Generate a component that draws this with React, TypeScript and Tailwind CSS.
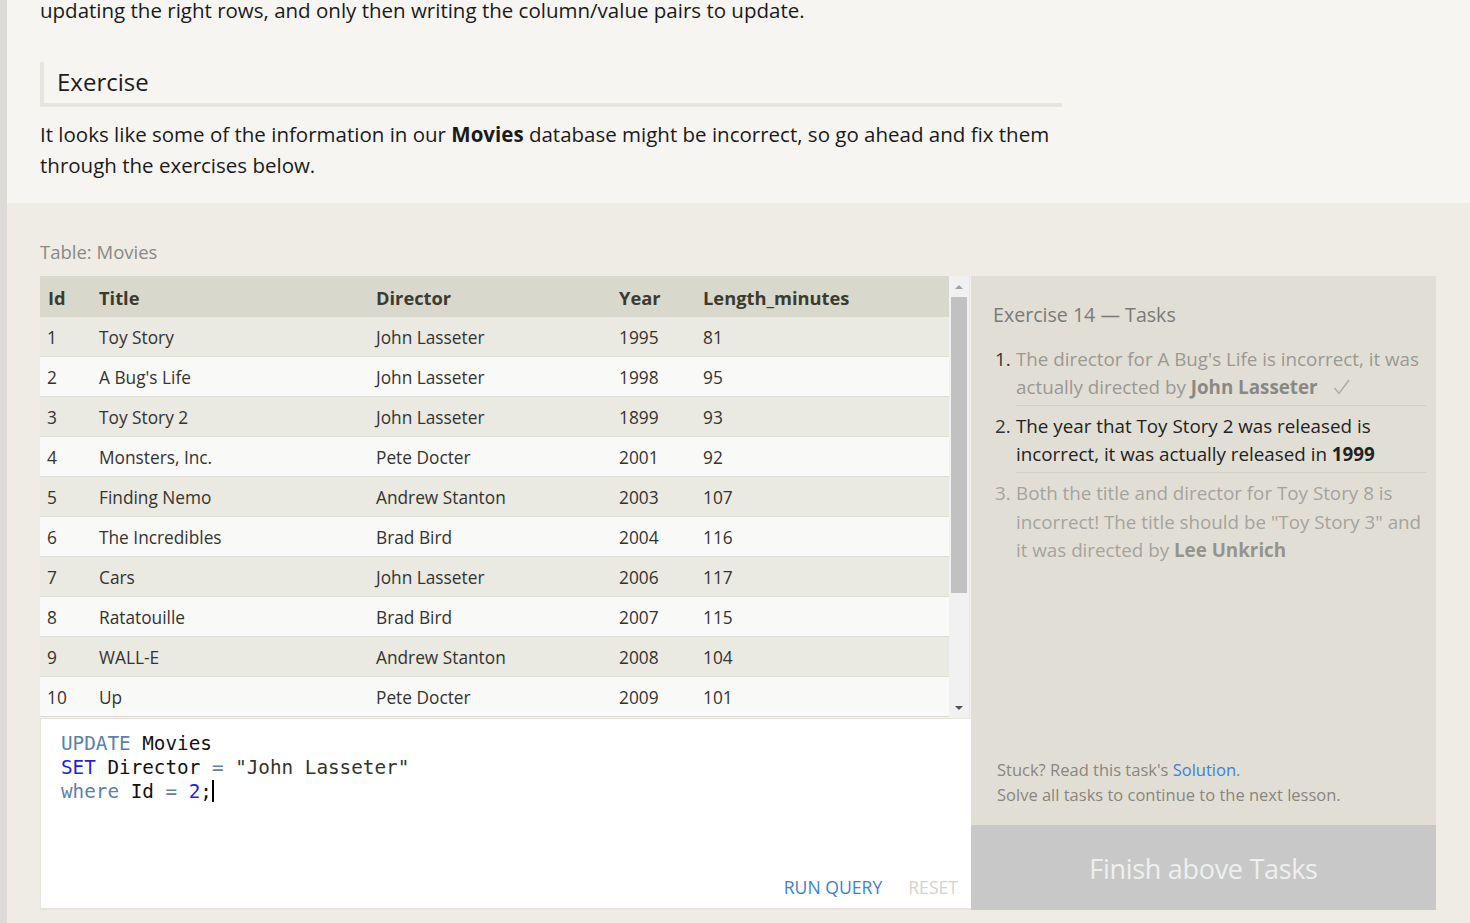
import React from "react";

const movies: [number, string, string, number, number][] = [
  [1, "Toy Story", "John Lasseter", 1995, 81],
  [2, "A Bug's Life", "John Lasseter", 1998, 95],
  [3, "Toy Story 2", "John Lasseter", 1899, 93],
  [4, "Monsters, Inc.", "Pete Docter", 2001, 92],
  [5, "Finding Nemo", "Andrew Stanton", 2003, 107],
  [6, "The Incredibles", "Brad Bird", 2004, 116],
  [7, "Cars", "John Lasseter", 2006, 117],
  [8, "Ratatouille", "Brad Bird", 2007, 115],
  [9, "WALL-E", "Andrew Stanton", 2008, 104],
  [10, "Up", "Pete Docter", 2009, 101],
];

const cols = "grid grid-cols-[51px_277px_243px_84px_1fr]";

export default function App() {
  return (
    <div className="min-h-[923px] w-full flex bg-[#efece5] font-['Open_Sans',sans-serif] overflow-hidden">
      <div className="w-[7px] shrink-0 bg-[#dcdbd7]" />
      <div className="flex-1 flex flex-col">
        {/* top text section */}
        <div className="bg-[#f6f5f2] pl-[33px] pb-[22px]">
          <p className="-mt-[5px] leading-[31px] text-[20.5px] text-[#1a1a1a] whitespace-nowrap">
            updating the right rows, and only then writing the column/value pairs to update.
          </p>
          <div className="mt-[36px] w-[1022px] h-[45px] border-l-4 border-b-4 border-[#e7e5de] pl-[13px] flex items-center">
            <h2 className="text-[24px] text-[#1c1c1c] font-normal -mt-[1px]">Exercise</h2>
          </div>
          <p className="mt-[12px] leading-[31px] text-[20.5px] text-[#1a1a1a] whitespace-nowrap">
            It looks like some of the information in our <b className="font-bold">Movies</b> database might be incorrect, so go ahead and fix them
            <br />
            through the exercises below.
          </p>
        </div>

        {/* exercise area */}
        <div className="flex-1 bg-[#efece5] pl-[33px] pt-[36px] pb-[13px]">
          <div className="leading-[26px] text-[18.5px] text-[#8a8884] mb-[11px]">Table: Movies</div>
          <div className="flex h-[634px]">
            {/* left column */}
            <div className="w-[931px] flex flex-col">
              <div className="h-[442px] flex bg-[#f1f1f1] overflow-hidden">
                <div className="w-[909px] flex flex-col">
                  <div className={`${cols} h-[41px] pt-[3px] items-center bg-[#d9d8cd] text-[18.3px] font-bold text-[#3b3b30]`}>
                    <div className="pl-[8px]">Id</div>
                    <div className="pl-[8px]">Title</div>
                    <div className="pl-[8px]">Director</div>
                    <div className="pl-[8px]">Year</div>
                    <div className="pl-[8px]">Length_minutes</div>
                  </div>
                  {movies.map((m, i) => (
                    <div
                      key={m[0]}
                      className={`${cols} h-[40px] pt-[3px] items-center border-b border-[#dddcd6] text-[17.3px] text-[#333330] ${
                        i % 2 === 0 ? "bg-[#eae9e2]" : "bg-[#f9f9f8]"
                      }`}
                    >
                      <div className="pl-[7px]">{m[0]}</div>
                      <div className="pl-[8px]">{m[1]}</div>
                      <div className="pl-[8px]">{m[2]}</div>
                      <div className="pl-[8px]">{m[3]}</div>
                      <div className="pl-[8px]">{m[4]}</div>
                    </div>
                  ))}
                </div>
                {/* scrollbar */}
                <div className="w-[21px] flex flex-col items-center bg-[#f1f1f1] border-r border-[#e8e6df]">
                  <div className="h-[21px] w-full flex items-center justify-center">
                    <div className="w-0 h-0 border-l-[4px] border-r-[4px] border-b-[4px] border-l-transparent border-r-transparent border-b-[#a3a3a3]" />
                  </div>
                  <div className="w-[16px] h-[296px] bg-[#c1c1c1]" />
                  <div className="flex-1" />
                  <div className="h-[21px] w-full flex items-center justify-center">
                    <div className="w-0 h-0 border-l-[4px] border-r-[4px] border-t-[4px] border-l-transparent border-r-transparent border-t-[#505050]" />
                  </div>
                </div>
              </div>
              {/* editor */}
              <div className="flex-1 bg-white border-l border-b-2 border-t border-[#e6e4dc] flex flex-col">
                <div className="pl-[20px] pt-[13px] font-['DejaVu_Sans_Mono',monospace] text-[19.3px] leading-[24px] text-[#111] whitespace-pre">
                  <div>
                    <span className="text-[#5a7fb0]">UPDATE</span> Movies
                  </div>
                  <div>
                    <span className="text-[#1f1fe0]">SET</span> Director <span className="text-[#6a7c98]">=</span>{" "}
                    <span className="text-[#34342a]">"John Lasseter"</span>
                  </div>
                  <div>
                    <span className="text-[#5a7fb0]">where</span> Id <span className="text-[#6a7c98]">=</span>{" "}
                    <span className="text-[#1f1fe0]">2</span>;
                    <span className="inline-block w-[2px] h-[22px] bg-black align-middle -mt-[3px]" />
                  </div>
                </div>
                <div className="mt-auto flex justify-end items-center gap-[26px] pr-[13px] pb-[8px] text-[17.6px]">
                  <span className="text-[#3f7fcf]">RUN QUERY</span>
                  <span className="text-[#d2d3cc]">RESET</span>
                </div>
              </div>
            </div>

            {/* right panel */}
            <div className="w-[465px] bg-[#e1dfd5] flex flex-col">
              <div className="pl-[22px] pr-[10px] pt-[25px]">
                <div className="text-[19.6px] leading-[28px] text-[#7a7a78]">Exercise 14 — Tasks</div>
                <ol className="mt-[11px] text-[18.8px] leading-[28px] whitespace-nowrap">
                  <li className="flex pt-[5px] pb-[4px]">
                    <span className="w-[23px] pl-[2px] text-[#333]">1.</span>
                    <span className="flex-1 border-b border-[#d3d1c7] pb-[4px] -mb-[4px] text-[#9a9893]">
                      The director for A Bug's Life is incorrect, it was
                      <br />
                      actually directed by <b className="font-bold text-[#8a8884]">John Lasseter</b>
                      <svg className="inline-block ml-[15px] -mt-[4px] align-middle" width="17" height="16" viewBox="0 0 17 16">
                        <polyline points="1.5,9 6,14.5 16,1" fill="none" stroke="#aaa8a2" strokeWidth="1.3" />
                      </svg>
                    </span>
                  </li>
                  <li className="flex pt-[6px] pb-[4px]">
                    <span className="w-[23px] pl-[2px] text-[#333]">2.</span>
                    <span className="flex-1 border-b border-[#d3d1c7] pb-[4px] -mb-[4px] text-[#222]">
                      The year that Toy Story 2 was released is
                      <br />
                      incorrect, it was actually released in <b className="font-bold text-[#222]">1999</b>
                    </span>
                  </li>
                  <li className="flex pt-[6px]">
                    <span className="w-[23px] pl-[2px] text-[#a5a39e]">3.</span>
                    <span className="flex-1 text-[#a5a39e] leading-[28.5px]">
                      Both the title and director for Toy Story 8 is
                      <br />
                      incorrect! The title should be "Toy Story 3" and
                      <br />
                      it was directed by <b className="font-bold text-[#95938e]">Lee Unkrich</b>
                    </span>
                  </li>
                </ol>
              </div>
              <div className="mt-auto pl-[26px] pb-[18px] text-[16.5px] leading-[25px] text-[#8a857e]">
                <div>
                  Stuck? Read this task's <span className="text-[#3d7fd6]">Solution</span>.
                </div>
                <div>Solve all tasks to continue to the next lesson.</div>
              </div>
              <div className="h-[85px] pt-[4px] bg-[#c8c8c8] flex items-center justify-center text-[27px] text-[#eef0ef] tracking-[-0.3px]">
                Finish above Tasks
              </div>
            </div>
          </div>
        </div>
      </div>
    </div>
  );
}
